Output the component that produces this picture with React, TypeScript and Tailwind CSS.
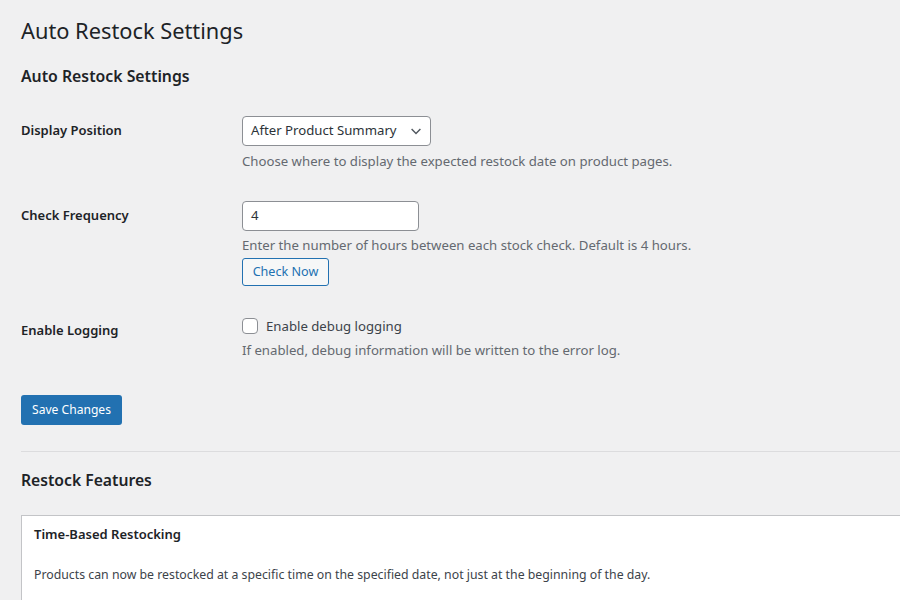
import React from "react";

const font = { fontFamily: '"Noto Sans", "Open Sans", sans-serif' };

const Row = ({ label, pt, children }: { label: string; pt: string; children: React.ReactNode }) => (
  <div className="flex">
    <div className={`w-[221px] shrink-0 text-[13px] leading-[18px] font-semibold text-[#1d2327] ${pt}`}>{label}</div>
    <div className="flex flex-col items-start">{children}</div>
  </div>
);

export default function App() {
  return (
    <div className="h-[600px] w-[900px] overflow-hidden bg-[#f0f0f1] text-[#3c434a]" style={font}>
      <div className="w-[1100px] pl-[21px]">
        <h1 className="pt-[14px] text-[21.8px] leading-[34px] font-normal text-[#1d2327]">Auto Restock Settings</h1>
        <h2 className="mt-[16px] text-[15.8px] font-semibold leading-[24px] text-[#1d2327]">Auto Restock Settings</h2>

        <div className="mt-[28px] flex flex-col">
          <Row label="Display Position" pt="pt-[5px]">
            <button className="flex h-[30px] w-[189px] items-center justify-between rounded-[4px] border border-[#8c8f94] bg-white pl-[8px] pr-[6px] text-[13.2px] text-[#2c3338]">
              <span>After Product Summary</span>
              <svg width="16" height="16" viewBox="0 0 20 20" fill="none" stroke="#50575e" strokeWidth="1.8">
                <path d="M4.5 7.5l5.5 5.5 5.5-5.5" />
              </svg>
            </button>
            <p className="mt-[6px] text-[13.2px] leading-[18px] text-[#646970]">Choose where to display the expected restock date on product pages.</p>
          </Row>

          <div className="mt-[31px]">
            <Row label="Check Frequency" pt="pt-[5px]">
              <div className="flex h-[30px] w-[177px] items-center rounded-[4px] border border-[#8c8f94] bg-white pl-[8px] text-[13.2px] text-[#2c3338]">4</div>
              <p className="mt-[5px] text-[13.2px] leading-[18px] text-[#646970]">Enter the number of hours between each stock check. Default is 4 hours.</p>
              <button className="mt-[4px] h-[28px] w-[87px] rounded-[3px] border border-[#2271b1] bg-[#f6f7f7] text-[12.6px] text-[#2271b1]">Check Now</button>
            </Row>
          </div>

          <div className="mt-[31px]">
            <Row label="Enable Logging" pt="pt-[4px]">
              <label className="flex h-[18px] items-center gap-[8px] text-[13.2px] leading-[18px] text-[#3c434a]">
                <span className="h-[16px] w-[16px] rounded-[4px] border border-[#8c8f94] bg-white" />
                Enable debug logging
              </label>
              <p className="mt-[6px] text-[13.2px] leading-[18px] text-[#646970]">If enabled, debug information will be written to the error log.</p>
            </Row>
          </div>
        </div>

        <button className="mt-[36px] h-[30px] w-[101px] rounded-[3px] bg-[#2271b1] text-[12.1px] text-white">Save Changes</button>

        <div className="mt-[26px] border-t border-[#dcdcde]" />

        <h2 className="mt-[16px] text-[15.7px] font-semibold leading-[24px] text-[#1d2327]">Restock Features</h2>

        <div className="mt-[23px] border border-[#c3c4c7] bg-white px-[12px] pt-[8px] pb-[20px]">
          <h3 className="text-[13px] font-semibold leading-[20px] text-[#1d2327]">Time-Based Restocking</h3>
          <p className="mt-[22px] text-[12.3px] leading-[18px] text-[#3c434a]">Products can now be restocked at a specific time on the specified date, not just at the beginning of the day.</p>
        </div>
      </div>
    </div>
  );
}
